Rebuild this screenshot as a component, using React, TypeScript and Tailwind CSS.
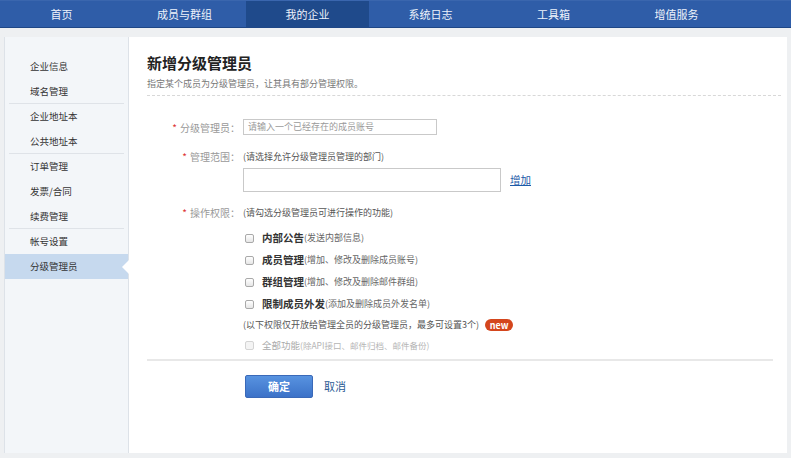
import React from 'react';

const font = { fontFamily: '"Noto Sans CJK SC", "Noto Sans", Arial, sans-serif' };

const tabs = ['首页', '成员与群组', '我的企业', '系统日志', '工具箱', '增值服务'];

const groups: string[][] = [
  ['企业信息', '域名管理'],
  ['企业地址本', '公共地址本'],
  ['订单管理', '发票/合同', '续费管理'],
  ['帐号设置', '分级管理员'],
];

const perms = [
  { name: '内部公告', note: '(发送内部信息)' },
  { name: '成员管理', note: '(增加、修改及删除成员账号)' },
  { name: '群组管理', note: '(增加、修改及删除邮件群组)' },
  { name: '限制成员外发', note: '(添加及删除成员外发名单)' },
];

const Checkbox = ({ disabled }: { disabled?: boolean }) => (
  <span
    className={
      'inline-block w-[9px] h-[9px] rounded-[2px] border ' +
      (disabled ? 'border-[#d4d4d4] bg-[#f4f4f4]' : 'border-[#a9a9a9] bg-gradient-to-b from-white to-[#e6e6e6]')
    }
  />
);

export default function App() {
  return (
    <div className="w-[791px] h-[458px] overflow-hidden bg-[#eef0f2]" style={font}>
      {/* top nav */}
      <div className="h-[28px] flex bg-[#2f5da8] border-b border-[#1f4786] border-t border-t-[#3a66ae]">
        {tabs.map((t) => (
          <div
            key={t}
            className={
              'w-[123px] flex items-center justify-center text-[11px] text-[#eef3fb] ' +
              (t === '我的企业' ? 'bg-[#1f4a8b]' : '')
            }
          >
            {t}
          </div>
        ))}
      </div>

      <div className="flex px-[4px] pt-[9px] h-[425px]">
        {/* sidebar */}
        <div className="w-[125px] shrink-0 bg-[#f3f6f9] border-l border-r border-[#dde2e8] pt-[17px]">
          {groups.map((g, gi) => (
            <div key={gi}>
              {g.map((item, ii) => {
                const active = item === '分级管理员';
                const last = ii === g.length - 1 && gi < groups.length - 1;
                return (
                  <div
                    key={item}
                    className={
                      'relative h-[25px] flex items-center pl-[25px] text-[9.5px] text-[#333] ' +
                      (active ? 'bg-[#c6d9ee]' : '')
                    }
                  >
                    {item}
                    {last && <span className="absolute left-[4px] right-[4px] bottom-0 border-b border-[#dfe3e8]" />}
                    {active && (
                      <span className="absolute right-[-1px] top-1/2 -translate-y-1/2 w-0 h-0 border-y-[7px] border-y-transparent border-r-[7px] border-r-white" />
                    )}
                  </div>
                );
              })}
            </div>
          ))}
        </div>

        {/* main */}
        <div className="flex-1 bg-white pl-[18px] pr-[14px] pt-[16px]">
          <div className="text-[15px] font-bold text-[#222] leading-[20px]">新增分级管理员</div>
          <div className="mt-[4px] mr-[-8px] text-[9px] text-[#777] leading-[14px] pb-[4px] border-b border-dashed border-[#d8d8d8]">
            指定某个成员为分级管理员，让其具有部分管理权限。
          </div>

          {/* row 1 */}
          <div className="flex items-center mt-[23px] h-[16px]">
            <div className="w-[93px] text-right text-[10px] text-[#999]">
              <span className="text-[#d33] mr-[3px]">*</span>分级管理员：
            </div>
            <div className="ml-[3px] w-[194px] h-[16px] border border-[#c9c9c9] flex items-center pl-[4px] text-[9px] text-[#9a9a9a]">
              请输入一个已经存在的成员账号
            </div>
          </div>

          {/* row 2 */}
          <div className="flex mt-[16px]">
            <div className="w-[93px] text-right text-[10px] text-[#999] leading-[12px]">
              <span className="text-[#d33] mr-[3px]">*</span>管理范围：
            </div>
            <div className="ml-[3px]">
              <div className="text-[9px] text-[#555] leading-[12px]">(请选择允许分级管理员管理的部门)</div>
              <div className="flex items-center mt-[5px]">
                <div className="w-[258px] h-[24px] border border-[#c9c9c9]" />
                <span className="ml-[9px] text-[10.5px] text-[#1c5aa8] underline">增加</span>
              </div>
            </div>
          </div>

          {/* row 3 */}
          <div className="flex mt-[15px]">
            <div className="w-[93px] text-right text-[10px] text-[#999] leading-[12px]">
              <span className="text-[#d33] mr-[3px]">*</span>操作权限：
            </div>
            <div className="ml-[3px] text-[9px] text-[#555] leading-[12px]">(请勾选分级管理员可进行操作的功能)</div>
          </div>

          <div className="ml-[96px] mt-[8px]">
            {perms.map((p) => (
              <div key={p.name} className="h-[22px] flex items-center pl-[2px]">
                <Checkbox />
                <span className="ml-[8px] text-[10.5px] font-bold text-[#333]">{p.name}</span>
                <span className="text-[9px] text-[#666]">{p.note}</span>
              </div>
            ))}
            <div className="h-[20px] flex items-center text-[9px] text-[#555]">
              (以下权限仅开放给管理全员的分级管理员，最多可设置3个)
              <span className="ml-[6px] w-[28px] h-[12px] rounded-full bg-[#d4461d] text-white text-[9px] font-bold flex items-center justify-center leading-none">
                new
              </span>
            </div>
            <div className="h-[20px] flex items-center pl-[2px]">
              <Checkbox disabled />
              <span className="ml-[8px] text-[9.5px] text-[#aaa]">全部功能</span>
              <span className="text-[8.5px] text-[#b5b5b5]">(除API接口、邮件归档、邮件备份)</span>
            </div>
          </div>

          <div className="mt-[4px] border-t-2 border-[#e8e8e8]" />

          <div className="flex items-center mt-[14px] ml-[98px]">
            <button className="w-[68px] h-[23px] rounded-[2px] border border-[#3a69b8] bg-gradient-to-b from-[#5893e0] to-[#3c72c8] text-white text-[11px] font-bold">
              确定
            </button>
            <span className="ml-[11px] text-[11px] text-[#2b5a93]">取消</span>
          </div>
        </div>
      </div>
    </div>
  );
}
